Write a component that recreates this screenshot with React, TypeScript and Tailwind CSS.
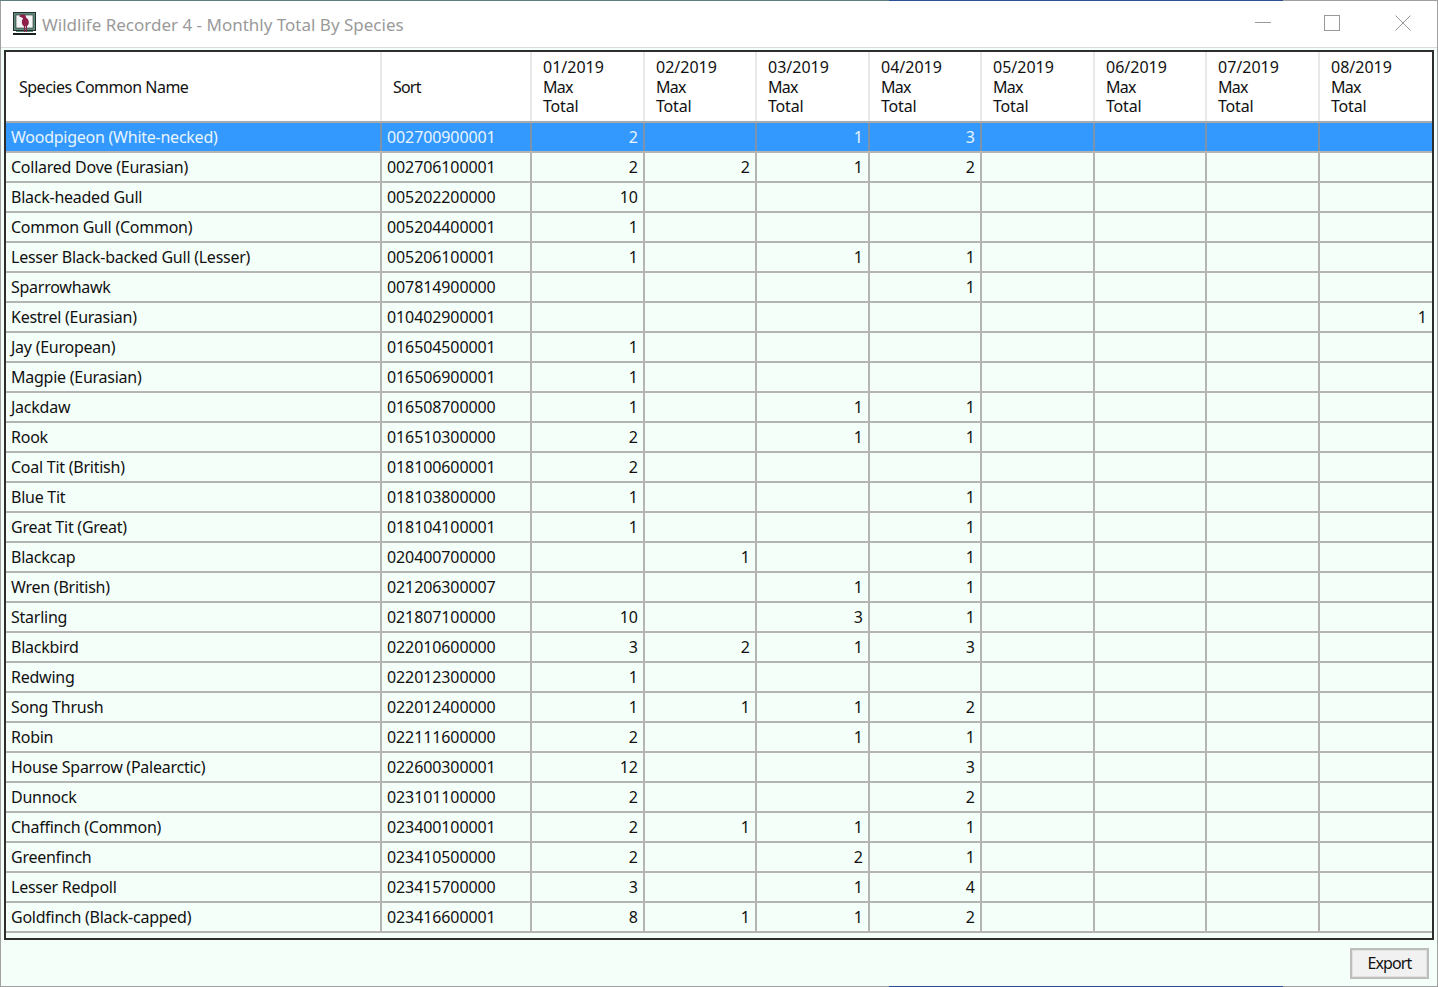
const months = ['01/2019', '02/2019', '03/2019', '04/2019', '05/2019', '06/2019', '07/2019', '08/2019'];

const rows: [string, string, string[]][] = [
  ['Woodpigeon (White-necked)', '002700900001', ['2', '', '1', '3']],
  ['Collared Dove (Eurasian)', '002706100001', ['2', '2', '1', '2']],
  ['Black-headed Gull', '005202200000', ['10']],
  ['Common Gull (Common)', '005204400001', ['1']],
  ['Lesser Black-backed Gull (Lesser)', '005206100001', ['1', '', '1', '1']],
  ['Sparrowhawk', '007814900000', ['', '', '', '1']],
  ['Kestrel (Eurasian)', '010402900001', ['', '', '', '', '', '', '', '1']],
  ['Jay (European)', '016504500001', ['1']],
  ['Magpie (Eurasian)', '016506900001', ['1']],
  ['Jackdaw', '016508700000', ['1', '', '1', '1']],
  ['Rook', '016510300000', ['2', '', '1', '1']],
  ['Coal Tit (British)', '018100600001', ['2']],
  ['Blue Tit', '018103800000', ['1', '', '', '1']],
  ['Great Tit (Great)', '018104100001', ['1', '', '', '1']],
  ['Blackcap', '020400700000', ['', '1', '', '1']],
  ['Wren (British)', '021206300007', ['', '', '1', '1']],
  ['Starling', '021807100000', ['10', '', '3', '1']],
  ['Blackbird', '022010600000', ['3', '2', '1', '3']],
  ['Redwing', '022012300000', ['1']],
  ['Song Thrush', '022012400000', ['1', '1', '1', '2']],
  ['Robin', '022111600000', ['2', '', '1', '1']],
  ['House Sparrow (Palearctic)', '022600300001', ['12', '', '', '3']],
  ['Dunnock', '023101100000', ['2', '', '', '2']],
  ['Chaffinch (Common)', '023400100001', ['2', '1', '1', '1']],
  ['Greenfinch', '023410500000', ['2', '', '2', '1']],
  ['Lesser Redpoll', '023415700000', ['3', '', '1', '4']],
  ['Goldfinch (Black-capped)', '023416600001', ['8', '1', '1', '2']],
];

const cols = 'grid grid-cols-[376px_150px_113px_112px_113px_112px_113px_112px_113px_112px]';

function AppIcon() {
  return (
    <svg width="24" height="24" viewBox="0 0 24 24" className="shrink-0">
      {/* monitor */}
      <rect x="0.5" y="0.5" width="22" height="18" fill="#5f8a7c" stroke="#26302e" />
      <rect x="3" y="3" width="17" height="13" fill="#f4f7f5" stroke="#26302e" strokeWidth="0.6" />
      <path d="M3 19h17v1h-17z" fill="#5f8a7c" />
      <path d="M0 21h23v2h-23z" fill="#16201e" />
      {/* bird */}
      <path d="M6 4c1.5-1.5 4-2 6-1 .8.4 1 1.4.8 2.2 2 1.4 3.4 3.6 3 6-.3 2-2 3.4-3.6 3.4-2 0-3.4-2-3.4-4.4 0-1.600.8-3 1.400-4-1.200-.8-2.800-.8-4.200-2.200z" fill="#8e1f4b" />
      <path d="M11.500 14v6M13.500 14v6" stroke="#8e1f4b" strokeWidth="1" />
    </svg>
  );
}

export default function App() {
  return (
    <div className="w-[1438px] h-[987px] bg-[#a0a0a0] font-['Noto_Sans',sans-serif] overflow-hidden">
      <div className="flex h-px">
        <div className="w-[889px] bg-[#5c7f83]" />
        <div className="w-[394px] bg-[#2a4f96]" />
        <div className="flex-1 bg-[#a0a0a0]" />
      </div>
      <div className="h-[985px] mx-px bg-[#f5fffa] flex flex-col">
        <div className="h-[47px] bg-white border-b border-[#dcdcdc] flex items-center shrink-0">
          <div className="ml-[12px] mr-[5px] mt-[-1px]"><AppIcon /></div>
          <span className="text-[17px] leading-none text-[#9a9a9a]">Wildlife Recorder 4 - Monthly Total By Species</span>
          <div className="ml-auto flex items-center mt-[-2px]">
            <svg width="16" height="16" viewBox="0 0 16 16" className="mr-[53px]"><path d="M0 7.500h16" stroke="#999" /></svg>
            <svg width="16" height="16" viewBox="0 0 16 16" className="mr-[55px]"><rect x="0.5" y="0.5" width="15" height="15" fill="none" stroke="#999" /></svg>
            <svg width="16" height="16" viewBox="0 0 16 16" className="mr-[26px]"><path d="M0.5 0.5l15 15M15.500 0.5l-15 15" stroke="#999" /></svg>
          </div>
        </div>

        <div className="mt-[2px] ml-[3px] w-[1430px] h-[890px] border-2 border-[#2e2e2e] bg-[#f5fffa] overflow-hidden shrink-0">
          <div className={`${cols} h-[71px] bg-white border-b-2 border-[#a9a9a9] text-[16px] leading-[19.5px] text-[#111]`}>
            <div className="flex items-center pt-[2px] pl-[13px] tracking-[-0.5px] border-r-2 border-[#e8e8e8]">Species Common Name</div>
            <div className="flex items-center pt-[2px] pl-[11px] tracking-[-0.8px] border-r-2 border-[#e8e8e8]">Sort</div>
            {months.map((m) => (
              <div key={m} className="flex flex-col justify-center pt-[2px] pl-[11px] border-r-2 border-[#e8e8e8] last:border-r-0">
                <span>{m}</span>
                <span className="tracking-[-0.8px]">Max</span>
                <span className="tracking-[-0.2px]">Total</span>
              </div>
            ))}
          </div>
          {rows.map(([name, sort, vals], i) => {
            const line = i === 0 ? 'border-[#7d93ab]' : 'border-[#b4b4b4]';
            return (
              <div
                key={sort}
                className={`${cols} h-[30px] border-b-2 border-[#b4b4b4] text-[16px] leading-[28px] ${i === 0 ? 'bg-[#3399ff] text-[#e8f4ff]' : 'text-[#111]'}`}
              >
                <div className={`pl-[5px] tracking-[-0.25px] border-r-2 whitespace-nowrap ${line}`}>{name}</div>
                <div className={`pl-[5px] tracking-[-0.1px] border-r-2 ${line}`}>{sort}</div>
                {months.map((m, j) => (
                  <div key={m} className={`pr-[5px] text-right border-r-2 last:border-r-0 ${line}`}>{vals[j] ?? ''}</div>
                ))}
              </div>
            );
          })}
        </div>

        <div className="flex justify-end mt-[8px] mr-[8px]">
          <button className="w-[79px] h-[31px] border-2 border-[#bdbdbd] bg-[#f1f1f1] shadow-[inset_0_0_0_1px_#e2e2e2] text-[16px] leading-[24px] tracking-[-0.9px] pb-[2px] text-[#111]">Export</button>
        </div>
      </div>
      <div className="flex h-px">
        <div className="w-[889px] bg-[#a0a0a0]" />
        <div className="w-[394px] bg-[#2a4f96]" />
        <div className="flex-1 bg-[#a0a0a0]" />
      </div>
    </div>
  );
}
